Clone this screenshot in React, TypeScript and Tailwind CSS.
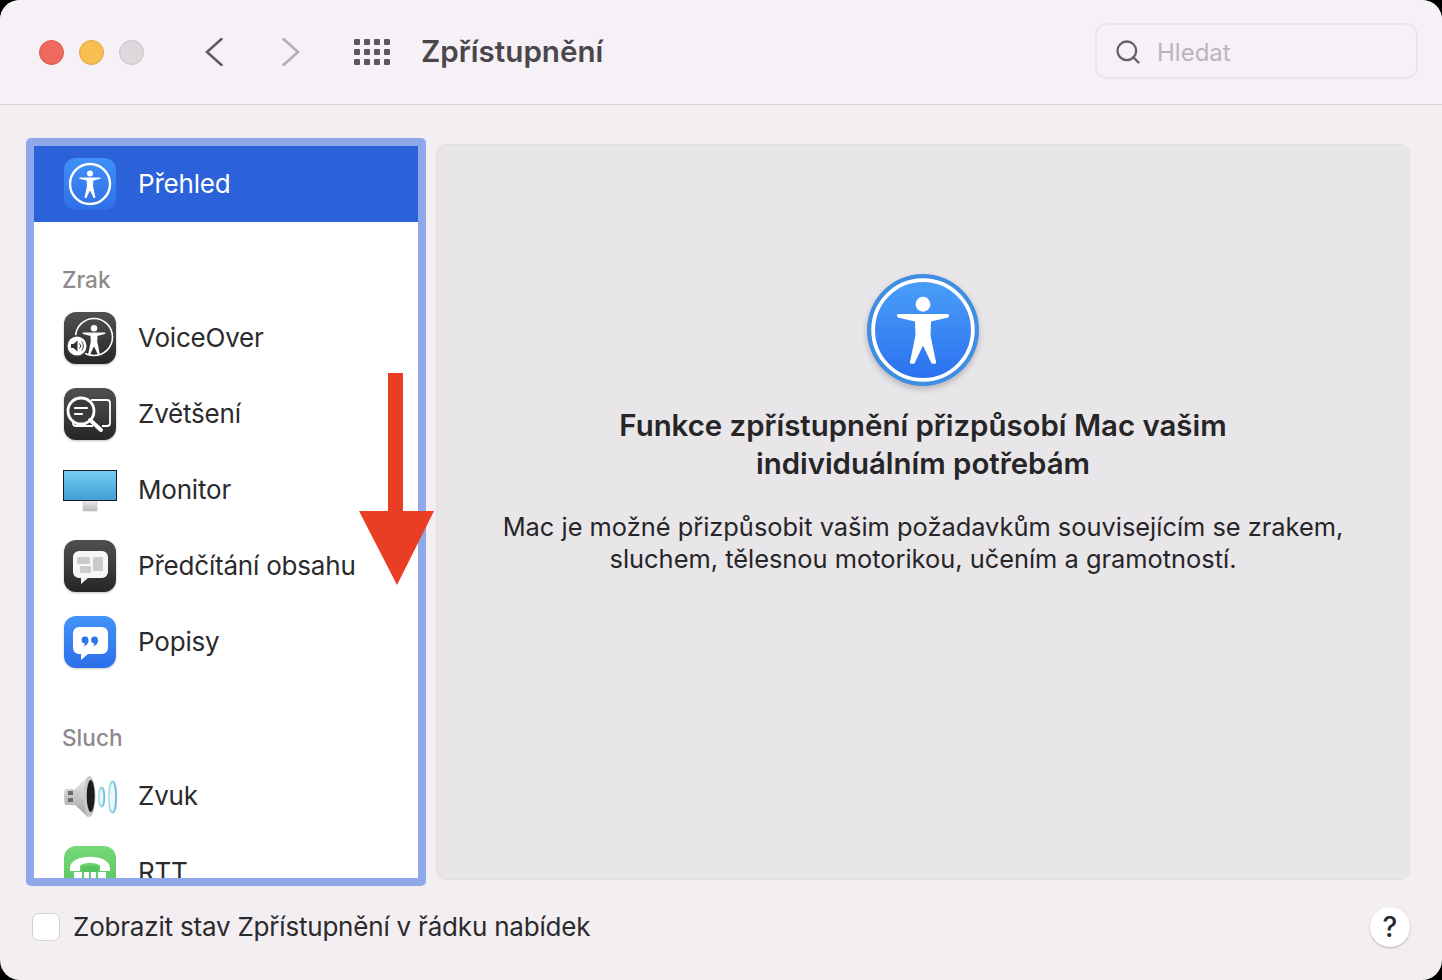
import React from 'react';
import { Search } from 'lucide-react';

const FIGURE = 'M28 37 L72 37 L72 37.6 L56 41.5 L55.5 55 L60.5 79 L58.5 79 L50 61 L41.5 79 L39.5 79 L44.5 55 L44 41.5 L28 37.6 Z';

const Figure = ({ fill = 'white' }: { fill?: string }) => (
  <g>
    <circle cx="50" cy="27" r="6.6" fill={fill} />
    <path d={FIGURE} fill={fill} stroke={fill} strokeWidth="2.4" strokeLinejoin="round" />
  </g>
);

const AccessHero = () => (
  <svg viewBox="0 0 100 100" className="w-[112px] h-[112px] drop-shadow-[0_3px_3px_rgba(0,0,0,0.22)]">
    <defs>
      <linearGradient id="heroBlue" x1="0" y1="0" x2="0" y2="1">
        <stop offset="0" stopColor="#4a9ff8" />
        <stop offset="1" stopColor="#2b70ef" />
      </linearGradient>
    </defs>
    <circle cx="50" cy="50" r="50" fill="#3f8ee2" />
    <circle cx="50" cy="50" r="44.5" fill="url(#heroBlue)" stroke="white" strokeWidth="3.4" />
    <Figure />
  </svg>
);

const OverviewIcon = () => (
  <svg viewBox="0 0 52 52" className="w-[52px] h-[52px]">
    <defs>
      <linearGradient id="blueTile" x1="0" y1="0" x2="0" y2="1">
        <stop offset="0" stopColor="#3f90f7" />
        <stop offset="1" stopColor="#2f70e8" />
      </linearGradient>
    </defs>
    <rect width="52" height="52" rx="12" fill="url(#blueTile)" />
    <circle cx="26" cy="26" r="20" fill="none" stroke="white" strokeWidth="2.4" />
    <svg x="3" y="3" width="46" height="46" viewBox="0 0 100 100">
      <Figure />
    </svg>
  </svg>
);

const DarkTile = ({ id, children }: { id: string; children: React.ReactNode }) => (
  <svg viewBox="0 0 52 52" className="w-[52px] h-[52px] drop-shadow-[0_1px_1px_rgba(0,0,0,0.25)]">
    <defs>
      <linearGradient id={id} x1="0" y1="0" x2="0" y2="1">
        <stop offset="0" stopColor="#505052" />
        <stop offset="1" stopColor="#262628" />
      </linearGradient>
    </defs>
    <rect width="52" height="52" rx="12" fill={`url(#${id})`} />
    {children}
  </svg>
);

const VoiceOverIcon = () => (
  <DarkTile id="voTile">
    <circle cx="30" cy="25" r="18.5" fill="none" stroke="white" strokeWidth="1.6" />
    <svg x="5.5" y="3" width="49" height="49" viewBox="0 0 100 100">
      <Figure />
    </svg>
    <circle cx="13" cy="34" r="11" fill="#3a3a3c" />
    <circle cx="13" cy="34" r="9.5" fill="white" />
    <path d="M7 32 h2.5 l4 -3.5 v11 l-4 -3.5 h-2.5 Z" fill="#333" />
    <path d="M15.5 31.5 a3.5 3.5 0 0 1 0 5 M17.5 29.5 a6.5 6.5 0 0 1 0 9" fill="none" stroke="#333" strokeWidth="1" />
  </DarkTile>
);

const ZoomIcon = () => (
  <DarkTile id="zoomTile">
    <path d="M27 12 H43 a3 3 0 0 1 3 3 V35 a3 3 0 0 1 -3 3 H38 M29 38 H12 a3 3 0 0 1 -3 -3 V33" fill="none" stroke="white" strokeWidth="1.8" />
    <circle cx="17" cy="23" r="13" fill="#3a3a3c" stroke="white" strokeWidth="2.8" />
    <path d="M26 32 L37 42" stroke="white" strokeWidth="4" strokeLinecap="round" />
    <path d="M11 20 H23 M11 26 H18" stroke="white" strokeWidth="2.2" strokeLinecap="round" />
  </DarkTile>
);

const MonitorIcon = () => (
  <svg viewBox="0 0 54 42" className="w-[54px] h-[42px] mt-[1px]">
    <defs>
      <linearGradient id="screen" x1="0" y1="0" x2="0" y2="1">
        <stop offset="0" stopColor="#74cdf3" />
        <stop offset="1" stopColor="#3f9fd6" />
      </linearGradient>
      <linearGradient id="stand" x1="0" y1="0" x2="0" y2="1">
        <stop offset="0" stopColor="#eeeeee" />
        <stop offset="1" stopColor="#b8b8b8" />
      </linearGradient>
    </defs>
    <rect x="20" y="30" width="14" height="11" fill="url(#stand)" stroke="#c4c4c4" strokeWidth="0.6" />
    <rect x="0.5" y="0.5" width="53" height="30" fill="url(#screen)" stroke="#1c1c1e" />
  </svg>
);

const SpeechIcon = () => (
  <DarkTile id="speechTile">
    <path d="M15 11 H38 a6 6 0 0 1 6 6 V32 a6 6 0 0 1 -6 6 H24 L17 44 V38 H15 a6 6 0 0 1 -6 -6 V17 a6 6 0 0 1 6 -6 Z" fill="#f6f6f6" />
    <rect x="13" y="17" width="13" height="7" rx="1.5" fill="#cbcbcb" />
    <rect x="29" y="17" width="10" height="14" rx="1.5" fill="#cbcbcb" />
    <rect x="16" y="26" width="11" height="7" rx="1.5" fill="#cbcbcb" />
  </DarkTile>
);

const CaptionsIcon = () => (
  <svg viewBox="0 0 52 52" className="w-[52px] h-[52px] drop-shadow-[0_1px_1px_rgba(0,0,0,0.2)]">
    <defs>
      <linearGradient id="capTile" x1="0" y1="0" x2="0" y2="1">
        <stop offset="0" stopColor="#4293f8" />
        <stop offset="1" stopColor="#2d6fea" />
      </linearGradient>
    </defs>
    <rect width="52" height="52" rx="12" fill="url(#capTile)" />
    <path d="M15 11 H38 a6 6 0 0 1 6 6 V32 a6 6 0 0 1 -6 6 H24 L17 44 V38 H15 a6 6 0 0 1 -6 -6 V17 a6 6 0 0 1 6 -6 Z" fill="white" />
    <circle cx="21" cy="24" r="3.4" fill="#2f74ec" />
    <path d="M24.4 24 C24.6 27.5 22.5 29.5 19.5 30.5 C21 29 21.2 27.5 20.5 26.5 Z" fill="#2f74ec" />
    <circle cx="30.5" cy="24" r="3.4" fill="#2f74ec" />
    <path d="M33.9 24 C34.1 27.5 32 29.5 29 30.5 C30.5 29 30.7 27.5 30 26.5 Z" fill="#2f74ec" />
  </svg>
);

const SoundIcon = () => (
  <svg viewBox="0 0 56 44" className="w-[56px] h-[44px]">
    <defs>
      <linearGradient id="cone" x1="0" y1="0" x2="0" y2="1">
        <stop offset="0" stopColor="#ececec" />
        <stop offset="1" stopColor="#a2a2a2" />
      </linearGradient>
      <linearGradient id="wave" x1="0" y1="0" x2="1" y2="0">
        <stop offset="0" stopColor="#b9e2ef" />
        <stop offset="1" stopColor="#6fbcd8" />
      </linearGradient>
    </defs>
    <path d="M3 15 H13 L26 2 L32 22 L26 43 L13 31 H3 Q1 23 3 15 Z" fill="url(#cone)" />
    <rect x="6" y="17" width="5" height="4" fill="#6b6b6b" />
    <rect x="6" y="24" width="5" height="4" fill="#6b6b6b" />
    <ellipse cx="27.5" cy="22.5" rx="6" ry="20.5" fill="#c9c9c9" />
    <ellipse cx="28.7" cy="22" rx="4" ry="16" fill="#1c1c1e" />
    <ellipse cx="39.5" cy="23" rx="2.8" ry="9.5" fill="#e6f5fa" stroke="url(#wave)" strokeWidth="1.8" />
    <ellipse cx="50.5" cy="23" rx="3.6" ry="15.5" fill="#edf8fb" stroke="url(#wave)" strokeWidth="2" />
  </svg>
);

const RttIcon = () => (
  <svg viewBox="0 0 52 52" className="w-[52px] h-[52px]">
    <defs>
      <linearGradient id="rttTile" x1="0" y1="0" x2="0" y2="1">
        <stop offset="0" stopColor="#78d878" />
        <stop offset="1" stopColor="#4fc25a" />
      </linearGradient>
    </defs>
    <rect width="52" height="52" rx="12" fill="url(#rttTile)" />
    <path d="M6 22 C6 7 46 7 46 22 V25 H36 V20 C34 16 18 16 16 20 V25 H6 Z" fill="white" />
    <path d="M18 20 H34 V26 H18 Z" fill="#55c45f" />
    <rect x="10" y="26" width="8" height="10" fill="white" />
    <rect x="20" y="26" width="5" height="10" fill="white" />
    <rect x="27" y="26" width="5" height="10" fill="white" />
    <rect x="34" y="26" width="8" height="10" fill="white" />
  </svg>
);

const Arrow = () => (
  <svg viewBox="0 0 76 214" className="absolute left-[359px] top-[372px] w-[76px] h-[214px]">
    <path d="M29 1 H44 V139 H75 L38 213 L0 139 H29 Z" fill="#e93e24" />
  </svg>
);

const Row = ({ icon, label, selected }: { icon: React.ReactNode; label: string; selected?: boolean }) => (
  <div className={`flex items-center h-[76px] shrink-0 ${selected ? 'bg-[#2b62d9] text-white' : 'text-[#2b2a2c]'}`}>
    <div className="w-[104px] flex justify-center pl-[12px] pr-[4px]">{icon}</div>
    <span className="text-[26px] leading-none tracking-[-0.2px]">{label}</span>
  </div>
);

const GroupLabel = ({ label }: { label: string }) => (
  <div className="h-[78px] shrink-0 flex items-end pb-[6px] pl-[28px] text-[22.6px] leading-[28px] font-medium text-[#8d8a8d]">
    {label}
  </div>
);

export default function App() {
  return (
    <div className="w-[1442px] h-[980px] bg-black overflow-hidden font-['Inter','Noto_Sans',sans-serif]">
      <div className="relative w-full h-full rounded-[20px] overflow-hidden bg-[#f2eef2] flex flex-col">
        <header className="h-[105px] shrink-0 bg-[#f6f0f7] border-b border-[#d3cfd3] flex items-center pl-[39px] pr-[24px]">
          <div className="flex gap-[15px]">
            <div className="w-[25px] h-[25px] rounded-full bg-[#ee6a5e] border border-[#d9574c]" />
            <div className="w-[25px] h-[25px] rounded-full bg-[#f6bf4f] border border-[#dfa63b]" />
            <div className="w-[25px] h-[25px] rounded-full bg-[#dcd8dc] border border-[#c6c2c6]" />
          </div>
          <svg viewBox="0 0 18 28" className="ml-[61px] w-[18px] h-[28px]">
            <path d="M16.5 1 L2 14 L16.5 27" fill="none" stroke="#5f5c60" strokeWidth="2.6" strokeLinecap="round" />
          </svg>
          <svg viewBox="0 0 18 28" className="ml-[59px] w-[18px] h-[28px]">
            <path d="M1.5 1 L16 14 L1.5 27" fill="none" stroke="#b3b0b4" strokeWidth="2.6" strokeLinecap="round" />
          </svg>
          <div className="ml-[54px] grid grid-cols-4 gap-x-[4px] gap-y-[4px]">
            {Array.from({ length: 12 }).map((_, i) => (
              <div key={i} className="w-[6px] h-[6px] rounded-[1px] bg-[#5c595d]" />
            ))}
          </div>
          <h1 className="ml-[31px] text-[29.6px] font-semibold leading-none text-[#4a474b]">Zpřístupnění</h1>
          <div className="ml-auto w-[323px] h-[56px] rounded-[12px] border-2 border-[#ebe6ec] flex items-center pl-[17px] pt-[3px] mb-[3px]">
            <Search className="w-[28px] h-[28px] text-[#656266]" strokeWidth={2} />
            <span className="ml-[15px] pt-[1px] text-[24px] leading-none text-[#b9b5bb]">Hledat</span>
          </div>
        </header>

        <div className="flex gap-[10px] pl-[26px] pr-[32px] pt-[33px]">
          <aside className="w-[400px] h-[748px] shrink-0 rounded-[5px] border-[8px] border-[#8ea8ea] bg-white overflow-hidden flex flex-col">
            <Row selected icon={<OverviewIcon />} label="Přehled" />
            <GroupLabel label="Zrak" />
            <Row icon={<VoiceOverIcon />} label="VoiceOver" />
            <Row icon={<ZoomIcon />} label="Zvětšení" />
            <Row icon={<MonitorIcon />} label="Monitor" />
            <Row icon={<SpeechIcon />} label="Předčítání obsahu" />
            <Row icon={<CaptionsIcon />} label="Popisy" />
            <GroupLabel label="Sluch" />
            <Row icon={<SoundIcon />} label="Zvuk" />
            <Row icon={<RttIcon />} label="RTT" />
          </aside>

          <main className="flex-1 h-[736px] mt-[6px] rounded-[10px] border border-[#e2dfe2] bg-[#e9e6e9] flex flex-col items-center pt-[129px] text-center text-[#262527]">
            <AccessHero />
            <h2 className="mt-[21px] text-[29.4px] leading-[38px] font-semibold">
              Funkce zpřístupnění přizpůsobí Mac vašim
              <br />
              individuálním potřebám
            </h2>
            <p className="mt-[28px] text-[25.4px] leading-[32px]">
              Mac je možné přizpůsobit vašim požadavkům souvisejícím se zrakem,
              <br />
              sluchem, tělesnou motorikou, učením a gramotností.
            </p>
          </main>
        </div>

        <footer className="mt-[21px] flex items-center h-[40px] pl-[32px] pr-[32px] text-[#2b2a2c]">
          <div className="w-[28px] h-[28px] rounded-[7px] border border-[#d5d1d5] bg-white" />
          <span className="ml-[13px] text-[26px] leading-none tracking-[-0.2px]">Zobrazit stav Zpřístupnění v řádku nabídek</span>
          <button className="ml-auto w-[40px] h-[40px] rounded-full bg-white shadow-[0_1px_2px_rgba(0,0,0,0.25)] text-[28px] font-medium leading-none text-[#2b2a2c]">
            ?
          </button>
        </footer>

        <Arrow />
      </div>
    </div>
  );
}
